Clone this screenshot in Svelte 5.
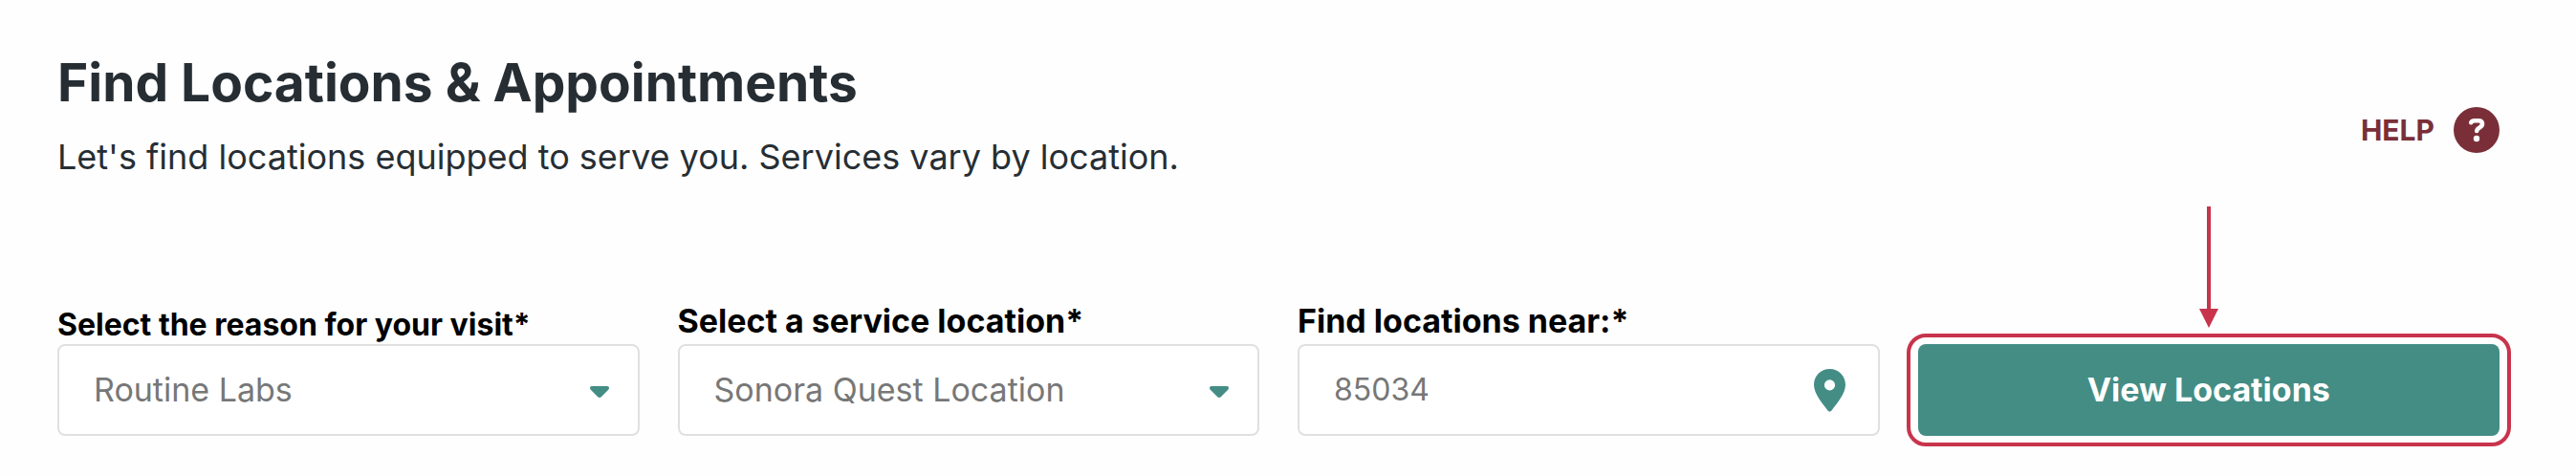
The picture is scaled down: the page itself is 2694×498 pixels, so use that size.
<script>
  let reason = $state('Routine Labs');
  let service = $state('Sonora Quest Location');
  let near = $state('85034');
</script>

{#snippet caret()}
  <svg class="caret" viewBox="0 0 20 12" aria-hidden="true">
    <path d="M2 0H18Q20 0 20 2Q20 3 19 4L12 11Q10 13 8 11L1 4Q0 3 0 2Q0 0 2 0Z" />
  </svg>
{/snippet}

<main class="page">
  <header class="header">
    <div class="intro">
      <h1>Find Locations &amp; Appointments</h1>
      <p>Let's find locations equipped to serve you. Services vary by location.</p>
    </div>
    <a class="help" href="#help">
      HELP
      <svg viewBox="0 0 48 48" aria-hidden="true">
        <circle cx="24" cy="24" r="24" fill="#7a2f38" />
        <path d="M18.200 16.200Q19.200 14.200 22 14.200H26Q30 14.200 30 17.600Q30 19.800 27.500 21.200Q24.500 22.800 24.200 25" fill="none" stroke="#fff" stroke-width="4.600" stroke-linecap="round" stroke-linejoin="round" />
        <circle cx="24" cy="33" r="3.200" fill="#fff" />
      </svg>
    </a>
  </header>

  <form class="search" onsubmit={(e) => e.preventDefault()}>
    <div class="field">
      <label class="small" for="reason">Select the reason for your visit*</label>
      <div class="control">
        <select id="reason" bind:value={reason}>
          <option>Routine Labs</option>
        </select>
        {@render caret()}
      </div>
    </div>
    <div class="field">
      <label for="service">Select a service location*</label>
      <div class="control">
        <select id="service" bind:value={service}>
          <option>Sonora Quest Location</option>
        </select>
        {@render caret()}
      </div>
    </div>
    <div class="field">
      <label for="near">Find locations near:*</label>
      <div class="control">
        <input id="near" type="text" bind:value={near} />
        <svg class="pin" viewBox="0 0 33 45" aria-hidden="true">
          <path fill-rule="evenodd" d="M16.500 0C7.400 0 0 7.300 0 16.500C0 26 9 36 14.500 43.500Q16.500 45.800 18.500 43.500C24 36 33 26 33 16.500C33 7.300 25.600 0 16.500 0ZM16.500 11.300A5.600 5.600 0 1 1 16.500 22.500A5.600 5.600 0 1 1 16.500 11.300Z" />
        </svg>
      </div>
    </div>
    <div class="action">
      <button type="submit">View Locations</button>
      <svg class="arrow" viewBox="0 0 20 127" aria-hidden="true">
        <path d="M8 0H12V107H20L10 127L0 107H8Z" />
      </svg>
    </div>
  </form>
</main>

<style>
  :global(body) {
    margin: 0;
    background: #fefefe;
  }
  .page {
    box-sizing: border-box;
    padding: 50px 80px 32px 60px;
    font-family: Inter, sans-serif;
    color: #262e34;
  }
  .header {
    display: flex;
    justify-content: space-between;
    align-items: flex-end;
    gap: 40px;
  }
  h1 {
    margin: 0;
    font-size: 55px;
    line-height: 72px;
    font-weight: 700;
  }
  p {
    margin: 18px 0 0;
    font-size: 36px;
    line-height: 48px;
    font-weight: 400;
  }
  .help {
    display: flex;
    align-items: center;
    gap: 20px;
    margin-bottom: 28px;
    color: #7a2f38;
    font-size: 30px;
    font-weight: 700;
    text-decoration: none;
  }
  .help svg {
    width: 48px;
    height: 48px;
  }
  .search {
    display: grid;
    grid-template-columns: repeat(4, minmax(0, 1fr));
    gap: 40px;
    align-items: end;
    margin-top: 128px;
  }
  .field {
    display: flex;
    flex-direction: column;
    gap: 4px;
  }
  label {
    color: #000;
    font-size: 34px;
    line-height: 40px;
    font-weight: 700;
  }
  label.small {
    font-size: 32px;
    line-height: 32px;
  }
  .control,
  .action {
    position: relative;
    display: flex;
  }
  select,
  input {
    appearance: none;
    box-sizing: border-box;
    width: 100%;
    height: 96px;
    margin: 0;
    padding: 0 80px 2px 36px;
    border: 2px solid #e0e0e0;
    border-radius: 8px;
    background: #fff;
    color: #777;
    font: 400 34px Inter, sans-serif;
  }
  input {
    font-size: 32px;
  }
  .caret,
  .pin {
    position: absolute;
    top: 0;
    bottom: 0;
    margin: auto 0;
    fill: #438d85;
    pointer-events: none;
  }
  .caret {
    top: 4px;
    right: 32px;
    width: 20px;
    height: 12px;
  }
  .pin {
    right: 36px;
    width: 33px;
    height: 45px;
  }
  button {
    width: 100%;
    height: 96px;
    padding: 0 0 2px;
    border: 0;
    border-radius: 8px;
    background: #438d85;
    color: #fff;
    font: 700 34px Inter, sans-serif;
  }
  .action::after {
    content: '';
    position: absolute;
    inset: -11px -12px;
    border: 4px solid #c8344c;
    border-radius: 20px;
    pointer-events: none;
  }
  .arrow {
    position: absolute;
    left: 50%;
    bottom: 113px;
    width: 20px;
    height: 127px;
    margin-left: -10px;
    fill: #c8344c;
  }
</style>
